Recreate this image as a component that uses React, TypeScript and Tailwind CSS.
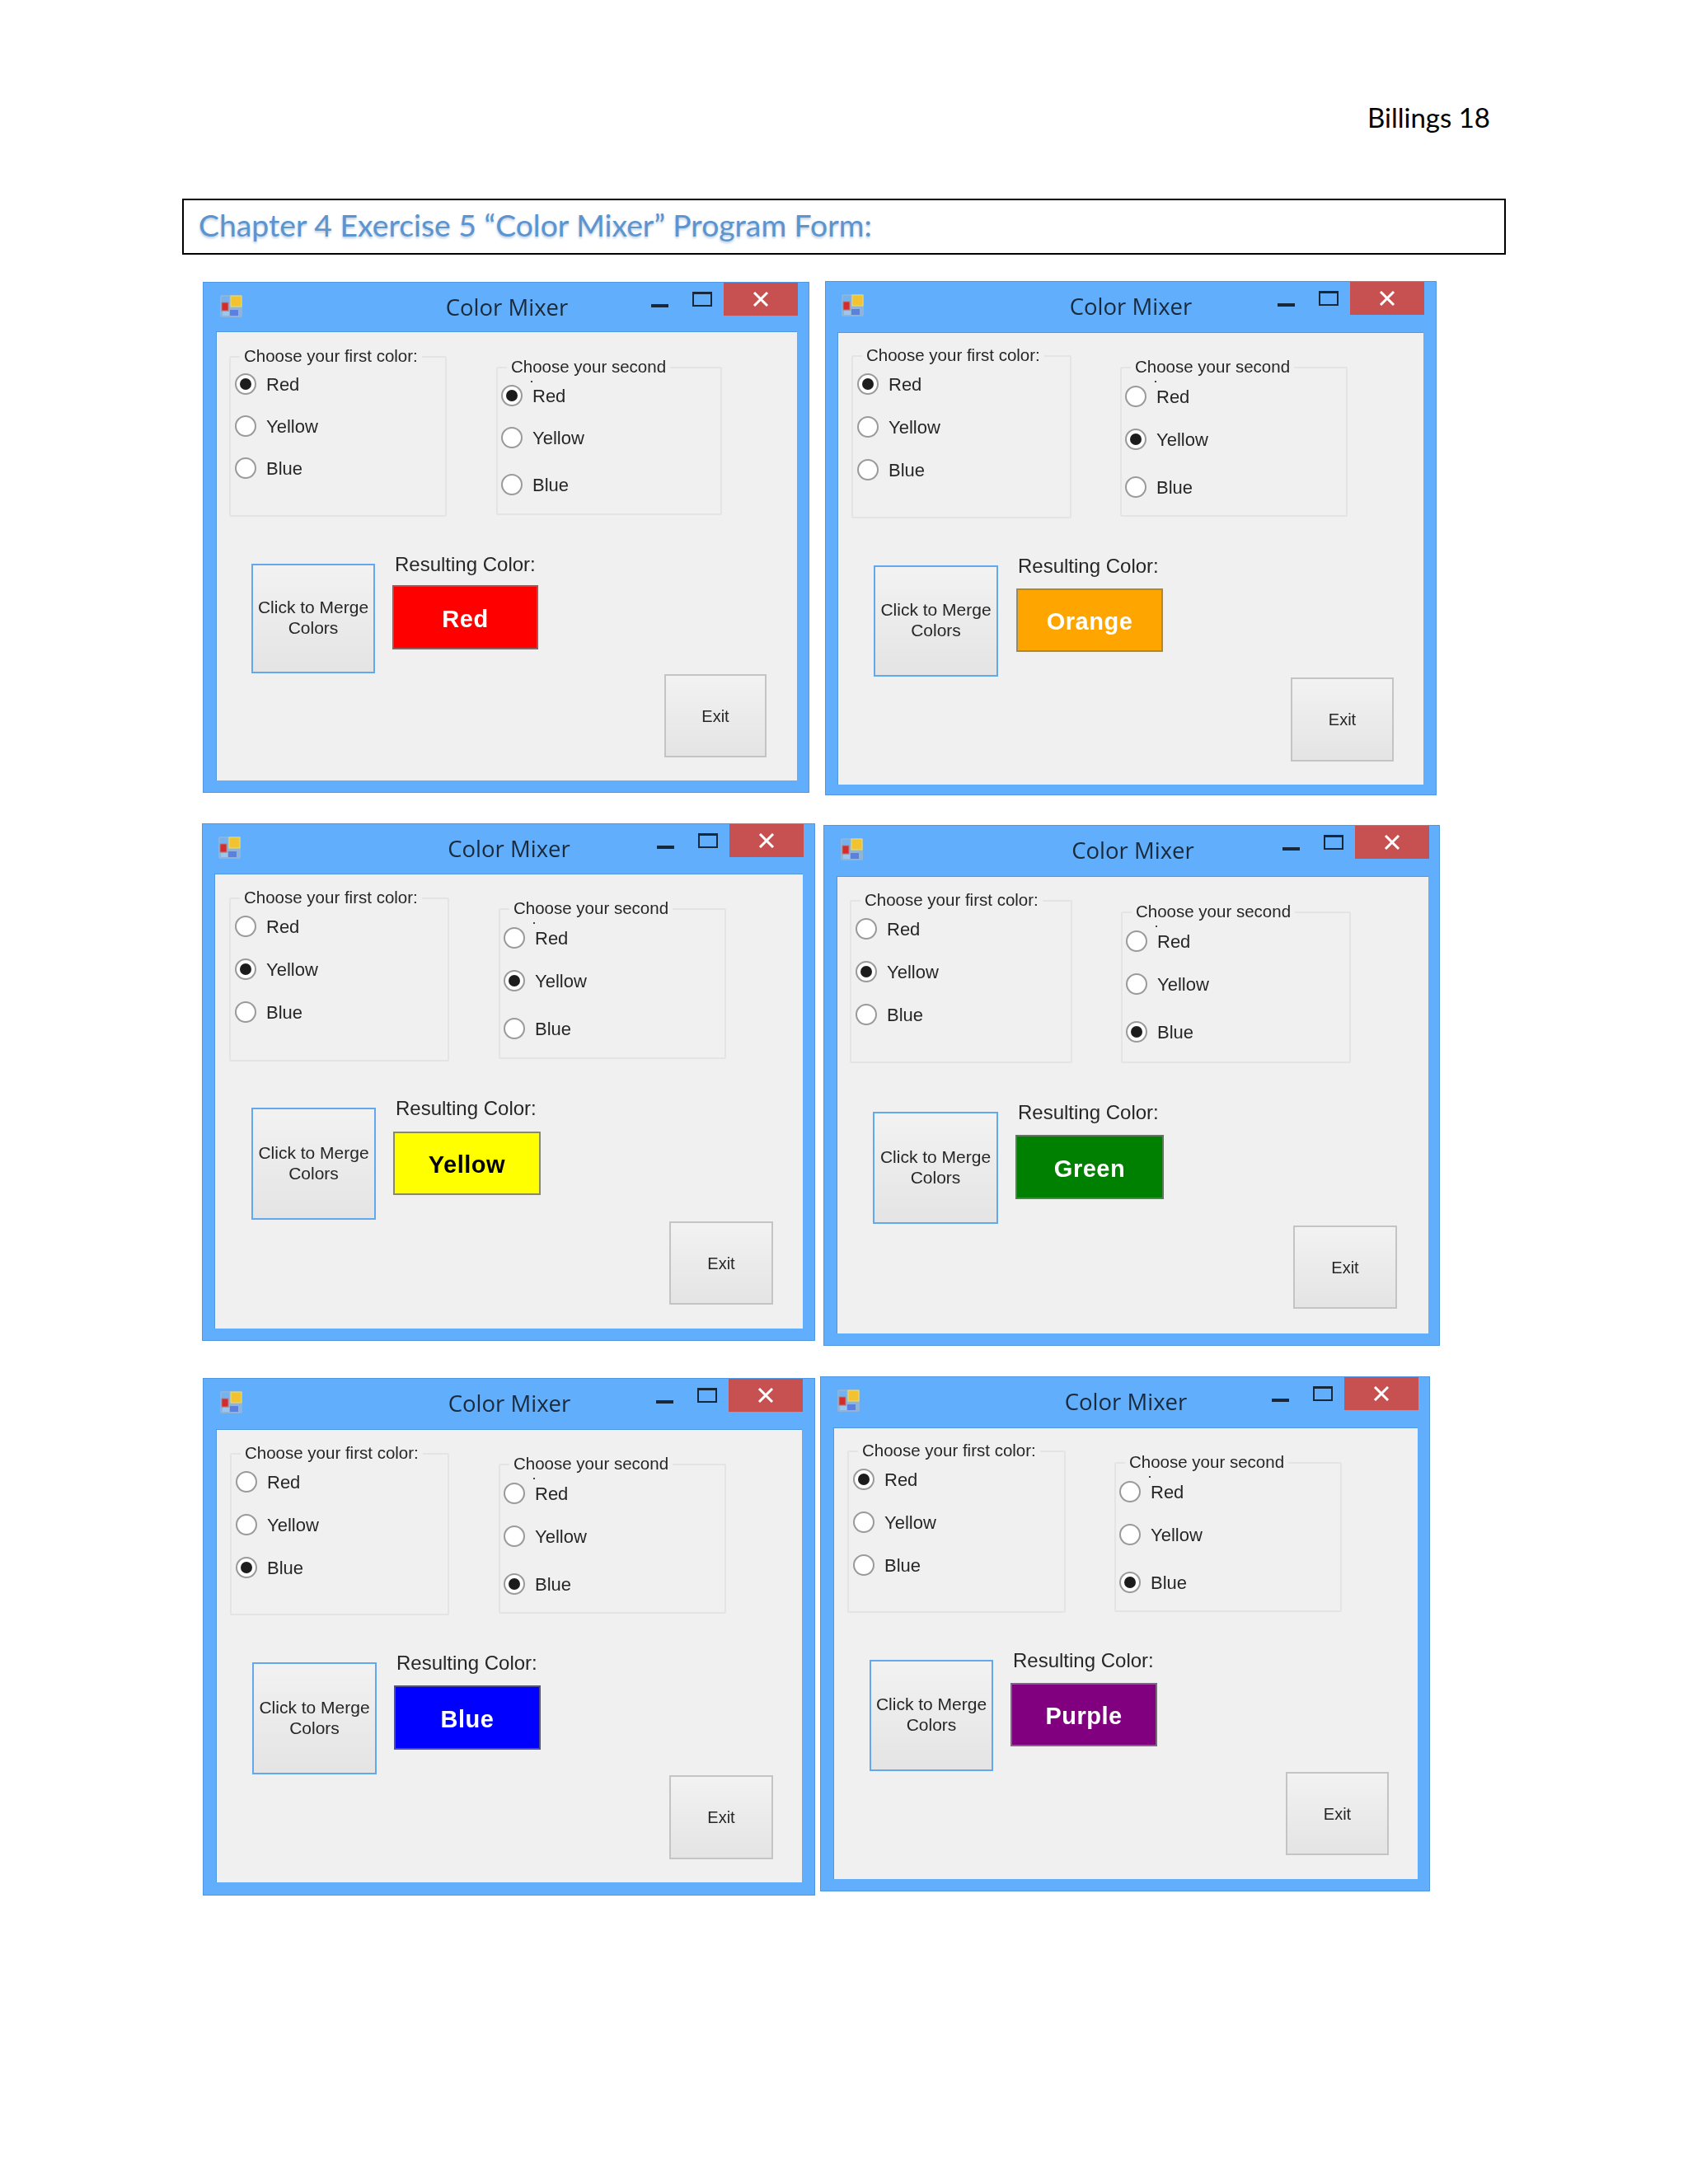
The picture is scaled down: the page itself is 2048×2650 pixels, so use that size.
import { type ReactNode } from "react"

type Pick3 = 0 | 1 | 2

interface WindowLayout {
  frame: string
  bar: string
  client: string
  first: string
  second: string
  radios: string
  merge: string
  result: string
  swatch: string
  exit: string
}

interface Mixer {
  first: Pick3
  second: Pick3
  name: string
  swatch: string
  layout: WindowLayout
}

const COLORS = ["Red", "Yellow", "Blue"]

const mixers: Mixer[] = [
  {
    first: 0,
    second: 0,
    name: "Red",
    swatch: "bg-[#ff0000] border-[#8a6060] text-white",
    layout: {
      frame: "mt-[1px] ml-[246px] w-[736px] h-[620px] pl-[15px] pb-[14px]",
      bar: "w-[706px] h-[59px]",
      client: "w-[705px] pl-[15px] pt-[29px]",
      first: "w-[264px] h-[195px]",
      second: "ml-[60px] mt-[13px] w-[274px] h-[180px]",
      radios: "gap-[25px] pt-[19px]",
      merge: "ml-[27px] w-[150px] h-[133px]",
      result: "mt-[45px]",
      swatch: "ml-[21px] mt-[12px] w-[177px] h-[78px]",
      exit: "mt-[1px] mr-[37px] w-[124px] h-[101px]",
    },
  },
  {
    first: 0,
    second: 1,
    name: "Orange",
    swatch: "bg-[#ffa500] border-[#9a8a60] text-white",
    layout: {
      frame: "ml-[19px] w-[742px] h-[624px] pl-[14px] pb-[12px]",
      bar: "w-[712px] h-[61px]",
      client: "w-[711px] pl-[16px] pt-[27px]",
      first: "w-[267px] h-[198px]",
      second: "ml-[59px] mt-[14px] w-[276px] h-[182px]",
      radios: "gap-[26px] pt-[20px]",
      merge: "ml-[27px] w-[151px] h-[135px]",
      result: "mt-[45px]",
      swatch: "ml-[22px] mt-[14px] w-[178px] h-[77px]",
      exit: "mt-[1px] mr-[36px] w-[125px] h-[102px]",
    },
  },
  {
    first: 1,
    second: 1,
    name: "Yellow",
    swatch: "bg-[#ffff00] border-[#8c8c50] text-black",
    layout: {
      frame: "ml-[245px] w-[744px] h-[628px] pl-[14px] pb-[14px]",
      bar: "w-[715px] h-[60px]",
      client: "w-[714px] pl-[17px] pt-[28px]",
      first: "w-[267px] h-[199px]",
      second: "ml-[60px] mt-[13px] w-[276px] h-[183px]",
      radios: "gap-[26px] pt-[20px]",
      merge: "ml-[27px] w-[151px] h-[136px]",
      result: "mt-[44px]",
      swatch: "ml-[21px] mt-[15px] w-[179px] h-[77px]",
      exit: "mt-[2px] mr-[36px] w-[126px] h-[101px]",
    },
  },
  {
    first: 1,
    second: 2,
    name: "Green",
    swatch: "bg-[#008000] border-[#5a7a5a] text-white",
    layout: {
      frame: "mt-[2px] ml-[10px] w-[748px] h-[632px] pl-[15px] pb-[14px]",
      bar: "w-[719px] h-[61px]",
      client: "w-[718px] pl-[15px] pt-[28px]",
      first: "w-[270px] h-[198px]",
      second: "ml-[59px] mt-[14px] w-[279px] h-[184px]",
      radios: "gap-[26px] pt-[20px]",
      merge: "ml-[28px] w-[152px] h-[136px]",
      result: "mt-[47px]",
      swatch: "ml-[21px] mt-[14px] w-[180px] h-[78px]",
      exit: "mt-[2px] mr-[38px] w-[126px] h-[101px]",
    },
  },
  {
    first: 2,
    second: 2,
    name: "Blue",
    swatch: "bg-[#0000ff] border-[#50508a] text-white",
    layout: {
      frame: "mt-[2px] ml-[246px] w-[743px] h-[628px] pl-[15px] pb-[15px]",
      bar: "w-[712px] h-[61px]",
      client: "w-[711px] pl-[16px] pt-[28px]",
      first: "w-[266px] h-[197px]",
      second: "ml-[60px] mt-[13px] w-[276px] h-[182px]",
      radios: "gap-[26px] pt-[20px]",
      merge: "ml-[27px] w-[151px] h-[136px]",
      result: "mt-[45px]",
      swatch: "ml-[21px] mt-[14px] w-[178px] h-[78px]",
      exit: "mt-[1px] mr-[35px] w-[126px] h-[102px]",
    },
  },
  {
    first: 0,
    second: 2,
    name: "Purple",
    swatch: "bg-[#800080] border-[#7a6a7a] text-white",
    layout: {
      frame: "ml-[6px] w-[740px] h-[625px] pl-[15px] pb-[14px]",
      bar: "w-[710px] h-[61px]",
      client: "w-[709px] pl-[16px] pt-[27px]",
      first: "w-[265px] h-[197px]",
      second: "ml-[59px] mt-[14px] w-[276px] h-[182px]",
      radios: "gap-[26px] pt-[20px]",
      merge: "ml-[27px] w-[150px] h-[135px]",
      result: "mt-[45px]",
      swatch: "ml-[21px] mt-[14px] w-[178px] h-[77px]",
      exit: "mt-[1px] mr-[35px] w-[125px] h-[101px]",
    },
  },
]

function AppIcon() {
  return (
    <svg width="27" height="27" viewBox="0 0 27 27" className="mt-[15px] ml-[5px]">
      <rect x="0" y="0" width="27" height="27" rx="2" fill="#8fb4d8" />
      <rect x="2" y="2" width="9" height="7" fill="#72b4f2" />
      <rect x="3" y="20" width="8" height="5" fill="#9cc6ee" />
      <rect x="13" y="1" width="13" height="13" fill="#f2c230" stroke="#e0e080" />
      <rect x="2" y="9" width="8" height="10" fill="#d42c2c" stroke="#b08080" />
      <rect x="12" y="18" width="10" height="7" fill="#5c80e0" />
    </svg>
  )
}

function WindowControls() {
  return (
    <div className="flex items-start justify-end">
      <div className="mt-[26px] mr-[29px] h-[4px] w-[21px] bg-[#16283a]" />
      <div className="mt-[11px] mr-[14px] h-[18px] w-[24px] border-2 border-t-[3px] border-[#16283a]" />
      <div className="flex h-[40px] w-[90px] items-center justify-center bg-[#c75050]">
        <svg width="20" height="18" viewBox="0 0 20 18">
          <path d="M2 1 L18 17 M18 1 L2 17" stroke="white" strokeWidth="3" fill="none" />
        </svg>
      </div>
    </div>
  )
}

function Radio({ label, checked }: { label: string; checked: boolean }) {
  return (
    <div className="flex h-[26px] items-center gap-[12px]">
      <span className="flex size-[26px] items-center justify-center rounded-full border-2 border-[#9a9a9a] bg-white">
        {checked && <span className="size-[14px] rounded-full bg-[#1c1c1c]" />}
      </span>
      <span>{label}</span>
    </div>
  )
}

function GroupBox({
  title,
  className,
  children,
}: {
  title: string
  className: string
  children: ReactNode
}) {
  return (
    <div className={`relative rounded-[2px] border-2 border-[#e4e4e4] ${className}`}>
      <span className="absolute top-[-15px] left-[11px] bg-[#f0f0f0] px-[5px] text-[20.5px] leading-[26px] whitespace-nowrap">
        {title}
      </span>
      {children}
    </div>
  )
}

function MixerWindow({ mixer }: { mixer: Mixer }) {
  const l = mixer.layout
  return (
    <div className={`flex shrink-0 flex-col border border-[#4f97e0] bg-[#60aefc] blur-[0.6px] ${l.frame}`}>
      <div className={`grid shrink-0 grid-cols-[1fr_auto_1fr] ${l.bar}`}>
        <AppIcon />
        <div className="mt-[11px] font-['Open_Sans',sans-serif] text-[27.5px] leading-[38px] text-[#1a2a3a]">
          Color Mixer
        </div>
        <WindowControls />
      </div>
      <div
        className={`flex flex-1 flex-col border-t border-l border-[#4f97e0] bg-[#f0f0f0] font-['Liberation_Sans',sans-serif] text-[22px] text-[#262626] ${l.client}`}
      >
        <div className="flex items-start">
          <GroupBox title="Choose your first color:" className={l.first}>
            <div className={`flex flex-col pl-[5px] ${l.radios}`}>
              {COLORS.map((c, i) => (
                <Radio key={c} label={c} checked={mixer.first === i} />
              ))}
            </div>
          </GroupBox>
          <GroupBox title="Choose your second" className={l.second}>
            <span className="absolute top-[15px] left-[40px] size-[2px] bg-[#444444]" />
            <div className={`mt-[1px] flex flex-col pl-[4px] ${l.radios}`}>
              <Radio label="Red" checked={mixer.second === 0} />
              <Radio label="Yellow" checked={mixer.second === 1} />
              <div className="mt-[6px]">
                <Radio label="Blue" checked={mixer.second === 2} />
              </div>
            </div>
          </GroupBox>
        </div>
        <div className={`flex items-start ${l.result}`}>
          <button
            className={`mt-[12px] border-2 border-[#62a8ec] bg-gradient-to-b from-[#f2f2f2] to-[#e4e4e4] pb-[3px] text-[21px] leading-[25px] ${l.merge}`}
          >
            Click to Merge
            <br />
            Colors
          </button>
          <div className="flex flex-col">
            <div className="ml-[24px] h-[26px] text-[24px] leading-[26px] whitespace-nowrap">Resulting Color:</div>
            <div
              className={`flex items-center justify-center border-2 pt-[5px] text-[29px] font-bold tracking-[0.5px] ${mixer.swatch} ${l.swatch}`}
            >
              {mixer.name}
            </div>
          </div>
        </div>
        <button
          className={`self-end border-2 border-[#c4c4c4] bg-gradient-to-b from-[#f2f2f2] to-[#e4e4e4] text-[20px] ${l.exit}`}
        >
          Exit
        </button>
      </div>
    </div>
  )
}

export default function App() {
  return (
    <div className="h-[2650px] w-[2048px] overflow-hidden bg-white pt-[120px]">
      <div className="pr-[240px] text-right font-['Lato',sans-serif] text-[33px] leading-[44px] text-black">
        Billings 18
      </div>
      <div className="mt-[77px] ml-[221px] flex h-[68px] w-[1606px] items-center border-2 border-black pb-[5px] pl-[18px] font-['Lato',sans-serif] text-[37.3px] text-[#5b94cf] [text-shadow:0_2px_3px_#b8c8dc]">
        Chapter 4 Exercise 5 “Color Mixer” Program Form:
      </div>
      <div className="mt-[32px] flex items-start">
        <MixerWindow mixer={mixers[0]} />
        <MixerWindow mixer={mixers[1]} />
      </div>
      <div className="mt-[34px] flex items-start">
        <MixerWindow mixer={mixers[2]} />
        <MixerWindow mixer={mixers[3]} />
      </div>
      <div className="mt-[37px] flex items-start">
        <MixerWindow mixer={mixers[4]} />
        <MixerWindow mixer={mixers[5]} />
      </div>
    </div>
  )
}
